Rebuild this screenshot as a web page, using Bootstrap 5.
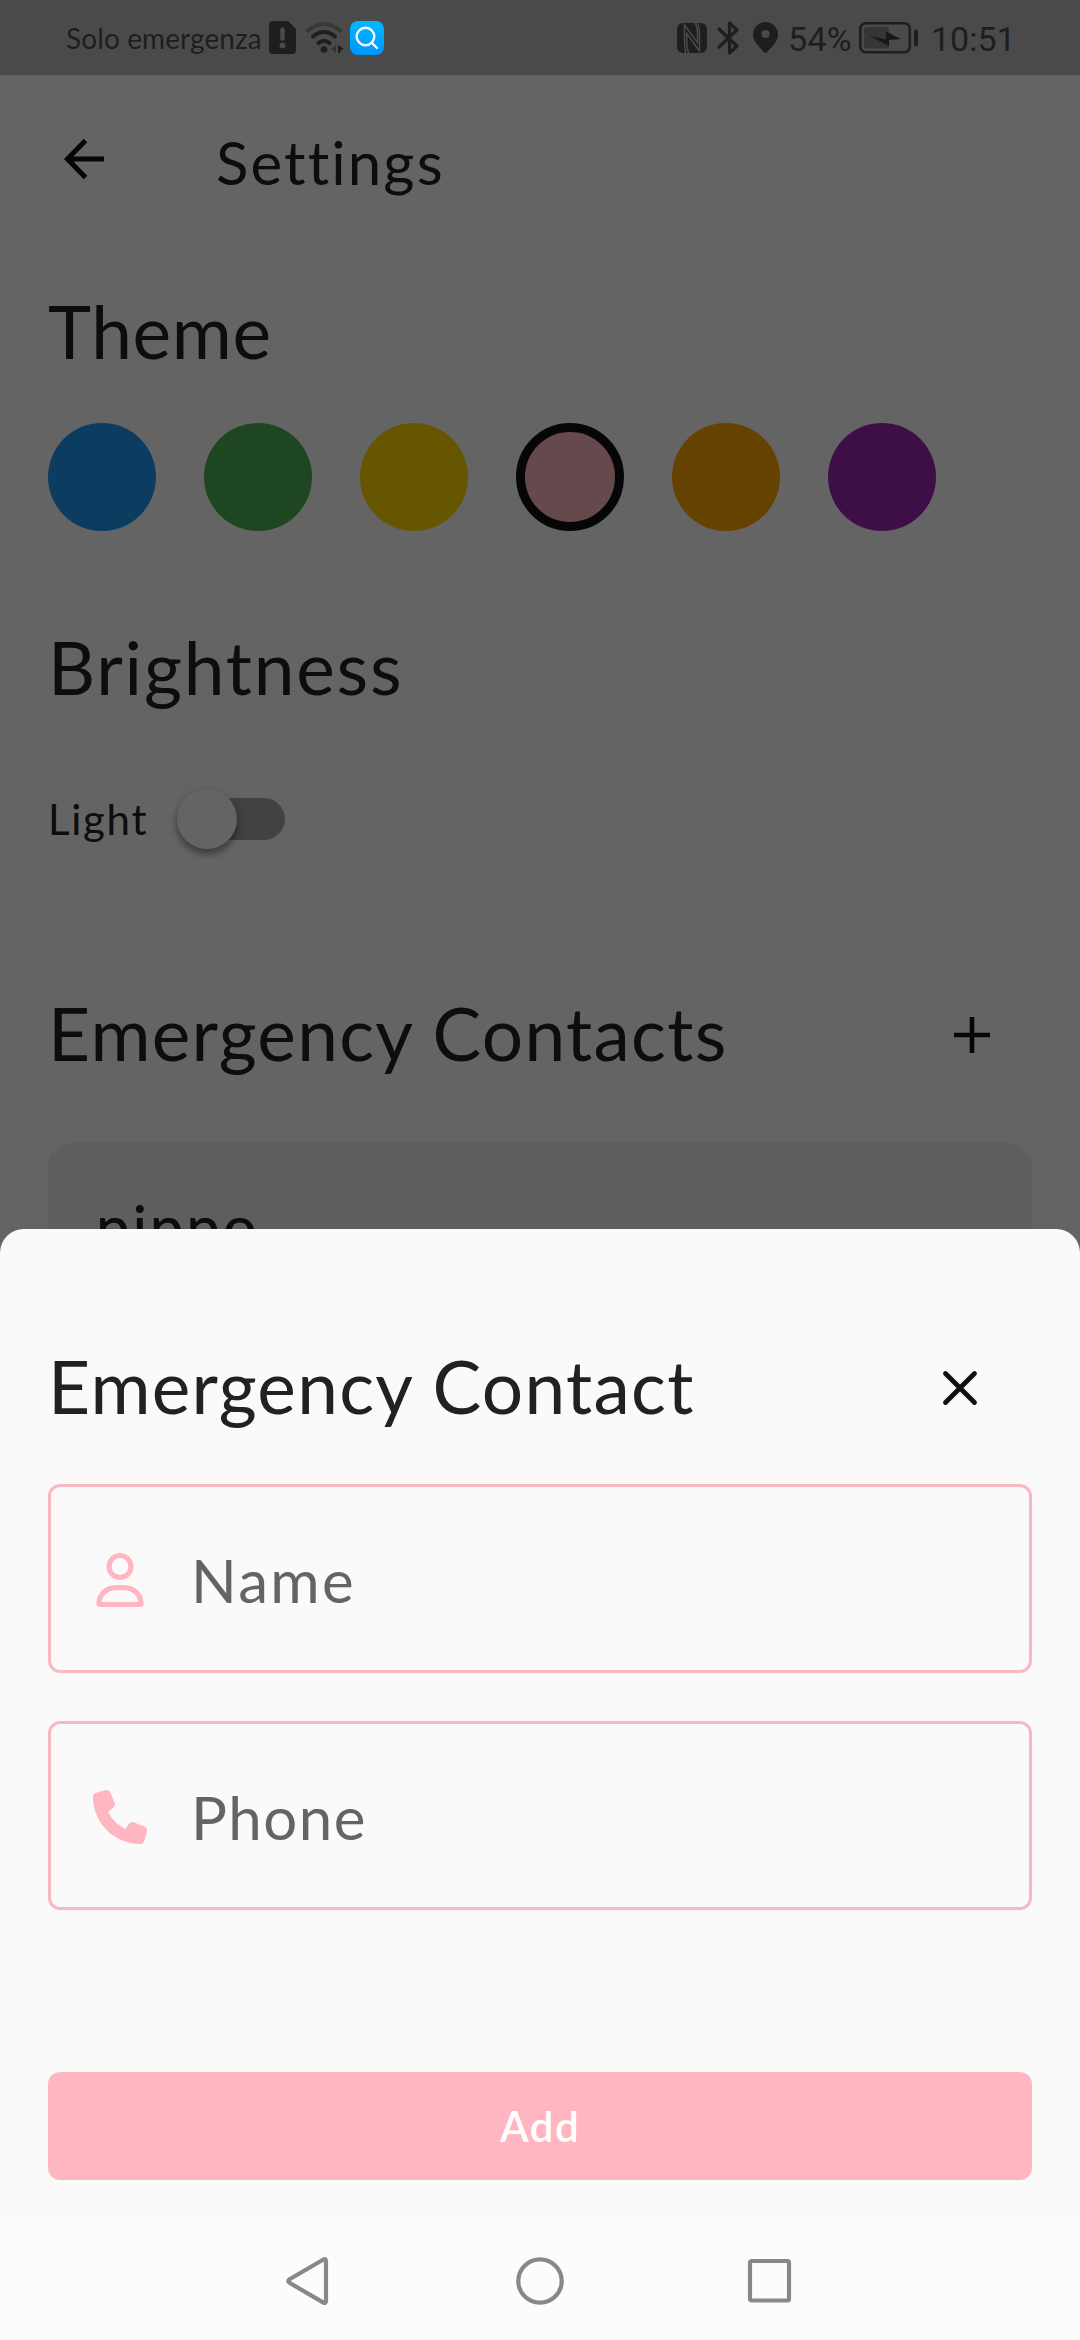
<!DOCTYPE html>
<html lang="en">
<head>
<meta charset="utf-8">
<meta name="viewport" content="width=device-width, initial-scale=1">
<title>Settings</title>
<link href="https://cdn.jsdelivr.net/npm/bootstrap@5.3.0/dist/css/bootstrap.min.css" rel="stylesheet">
<style>
body{font-family:Lato,"Open Sans",sans-serif;color:#212121;background:#fafafa}
.screen{width:1080px;height:2340px}
svg{display:block;flex:none}
.status{height:75px;background:#4a4a4a;color:#1e1e1e;padding:0 69px 0 66px;z-index:3}
.carrier{width:203px;font-size:28px;line-height:34px;letter-spacing:.1px}
.digits{font-family:Roboto,sans-serif;font-size:34px;line-height:40px;padding-top:3px}
.battery-level{width:71px;letter-spacing:.3px}
.clock{width:80px;margin-left:12px}
.ic-wifi{margin:0 6px 0 9px}
.ic-bt{margin:0 13px 0 10px}
.ic-pin{margin-right:10px}
.appbar{height:168px;padding:0 60px}
.app-title{font-size:60px;line-height:72px;margin:5px 0 0 108px;letter-spacing:2.1px;font-weight:400}
.settings{padding:44px 48px 0}
.section-title{font-size:73px;line-height:88px;font-weight:400;letter-spacing:1.3px;margin:0}
.title-theme{letter-spacing:.7px}
.title-brightness{letter-spacing:1.8px;margin-top:92px}
.swatches{gap:48px;margin-top:48px}
.swatch{width:108px;height:108px}
.swatch.selected{border:9px solid #101010}
.c-blue{background:#2196f3}.c-green{background:#4caf50}.c-yellow{background:#ffd700}
.c-pink{background:#ffb6c1}.c-orange{background:#ffa500}.c-purple{background:#9c27b0}
.light-row{height:60px;margin-top:78px;gap:32px}
.light-label{width:100px;font-size:42px;line-height:50px;letter-spacing:1.7px}
.toggle-track{width:105px;height:42px;background:#a5a5a5}
.toggle-knob{width:60px;height:60px;background:#fafafa;margin:-9px 0 0 -3px;box-shadow:0 5px 7px rgba(0,0,0,.35),0 2px 12px rgba(0,0,0,.12)}
.contacts-head{margin-top:140px;padding-right:42px}
.contact-card{background:#ebebeb;border-radius:24px;height:300px;padding:47px 48px;margin-top:66px}
.contact-name{font-size:60px;line-height:72px;font-weight:500;letter-spacing:2.7px}
.scrim{background:rgba(0,0,0,.6);z-index:2}
.sheet{height:1111px;background:#fafafa;border-radius:24px 24px 0 0;z-index:4}
.sheet-body{padding:113px 48px 42px}
.sheet-head{padding-right:54px;margin-bottom:54px}
.field{height:189px;border:3px solid #fab8c3;border-radius:12px;padding:3px 42px 0;gap:44px;color:#646464;font-size:60px;line-height:72px;margin-bottom:48px}
.field svg{fill:#ffb6c1}
.hint-name{letter-spacing:2.3px}
.hint-phone{letter-spacing:1.5px}
.btn-add,.btn-add:hover{height:108px;border:0;border-radius:12px;background:#ffb6c1;color:#fff;font-size:42px;font-weight:600;line-height:50px;letter-spacing:1.5px;margin-top:114px}
.sysnav{height:118px;background:#fcfcfc;gap:180px}
.sysnav svg{fill:none;stroke:#888;stroke-width:4.2;stroke-linejoin:round}
</style>
</head>
<body>
<div class="screen position-relative overflow-hidden">
  <header class="status position-relative d-flex align-items-center">
    <span class="carrier text-nowrap">Solo emergenza</span>
    <svg width="27" height="33" viewBox="0 0 27 33"><path fill="#1e1e1e" d="M4 0h15l8 8v21a4 4 0 0 1-4 4H4a4 4 0 0 1-4-4V4a4 4 0 0 1 4-4z"/><path stroke="#4a4a4a" stroke-width="4.6" stroke-linecap="round" d="M13.5 8.500v9"/><circle cx="13.500" cy="24.500" r="3" fill="#4a4a4a"/></svg>
    <svg class="ic-wifi" width="39" height="34" viewBox="0 0 39 34"><g fill="none" stroke-width="4" stroke-linecap="round"><path stroke="#383838" d="M3 9.500Q19 -3.500 35 9.500"/><path stroke="#1e1e1e" d="M8 15.500Q19 6.500 30 15.500M13.500 22Q19 17.500 24.500 22"/></g><circle cx="19" cy="28.500" r="3.300" fill="#1e1e1e"/><path fill="#333" d="M31 24v8l-5-4z"/><path fill="#1e1e1e" d="M33 24l6 4-3 1-1 3h-2z"/></svg>
    <svg width="34" height="34" viewBox="0 0 34 34"><defs><linearGradient id="sg" x2="0" y2="1"><stop stop-color="#00baff"/><stop offset="1" stop-color="#0094ff"/></linearGradient></defs><rect width="34" height="34" rx="8" fill="url(#sg)"/><g fill="none" stroke="#f4fbff" stroke-width="2.400" stroke-linecap="round"><circle cx="15.500" cy="15.500" r="8.800"/><path d="M22 22l5 5"/></g></svg>
    <svg class="ms-auto" width="30" height="30" viewBox="0 0 30 30"><rect width="30" height="30" rx="6" fill="#1e1e1e"/><g fill="none" stroke="#4a4a4a" stroke-width="1.500"><path d="M9 30Q7.500 26 7.500 16V2L20.500 19.500V11Q20.500 4 18 0"/><path d="M20.500 0Q22.500 4 22.500 14V28L9.800 10.500V19Q9.800 26 12 30"/></g></svg>
    <svg class="ic-bt" width="23" height="34" viewBox="0 0 23 34"><path fill="none" stroke="#1e1e1e" stroke-width="3.200" stroke-linecap="round" stroke-linejoin="round" d="M2 8L20 25 12.500 32V2L20 9 2 26"/></svg>
    <svg class="ic-pin" width="25" height="31" viewBox="0 0 25 31"><path fill="#1e1e1e" fill-rule="evenodd" d="M12.500 0A12.500 12.500 0 0 1 25 12.500C25 20 17.500 26 14 30.300Q12.500 31.700 11 30.300C7.500 26 0 20 0 12.500A12.500 12.500 0 0 1 12.500 0zM12.500 8a4 4 0 1 0 0 8 4 4 0 0 0 0-8z"/></svg>
    <span class="digits battery-level">54%</span>
    <svg width="60" height="32" viewBox="0 0 60 32"><rect x="1.300" y="1.300" width="49.500" height="29" rx="5.500" fill="none" stroke="#1e1e1e" stroke-width="2.600"/><rect x="5" y="5" width="25" height="21.500" rx="2.500" fill="#363636"/><path fill="#181818" d="M10 13.500L27 17.500V9.500L42 17 30 18V24z"/><rect x="55" y="7.500" width="4" height="17" rx="2" fill="#1e1e1e"/></svg>
    <span class="digits clock">10:51</span>
  </header>

  <nav class="appbar d-flex align-items-center">
    <svg width="48" height="48" viewBox="0 0 48 48"><path fill="none" stroke="#0f0f0f" stroke-width="5" d="M25.500 5.500L7.500 24 25.500 42.500M8 24H44"/></svg>
    <h1 class="app-title">Settings</h1>
  </nav>

  <main class="settings">
    <h2 class="section-title title-theme">Theme</h2>
    <div class="swatches d-flex">
      <span class="swatch rounded-circle c-blue"></span>
      <span class="swatch rounded-circle c-green"></span>
      <span class="swatch rounded-circle c-yellow"></span>
      <span class="swatch rounded-circle c-pink selected"></span>
      <span class="swatch rounded-circle c-orange"></span>
      <span class="swatch rounded-circle c-purple"></span>
    </div>
    <h2 class="section-title title-brightness">Brightness</h2>
    <div class="light-row d-flex align-items-center">
      <span class="light-label">Light</span>
      <div class="toggle-track rounded-pill d-flex"><span class="toggle-knob rounded-circle"></span></div>
    </div>
    <div class="contacts-head d-flex align-items-center justify-content-between">
      <h2 class="section-title">Emergency Contacts</h2>
      <svg class="mt-1" width="36" height="36" viewBox="0 0 36 36"><path stroke="#0f0f0f" stroke-width="4.600" d="M18 0V36M0 18H36"/></svg>
    </div>
    <div class="contact-card"><div class="contact-name">pippo</div></div>
  </main>

  <div class="scrim position-absolute top-0 start-0 w-100 h-100"></div>

  <section class="sheet position-absolute bottom-0 start-0 w-100 overflow-hidden">
    <div class="sheet-body">
      <div class="sheet-head d-flex align-items-center justify-content-between">
        <h2 class="section-title">Emergency Contact</h2>
        <svg class="mt-1" width="36" height="36" viewBox="0 0 36 36"><path stroke="#111" stroke-width="4.800" stroke-linecap="round" d="M3.500 3.500L32.500 32.500M32.500 3.500L3.500 32.500"/></svg>
      </div>
      <div class="field d-flex align-items-center">
        <svg width="54" height="54" viewBox="0 0 448 512"><path d="M304 128a80 80 0 1 0-160 0 80 80 0 1 0 160 0zM96 128a128 128 0 1 1 256 0A128 128 0 1 1 96 128zM49.300 464H398.700c-8.900-63.300-63.300-112-129-112H178.300c-65.700 0-120.100 48.700-129 112zM0 482.300C0 383.800 79.800 304 178.300 304h91.400C368.200 304 448 383.800 448 482.300c0 16.400-13.300 29.700-29.700 29.700H29.700C13.300 512 0 498.700 0 482.300z"/></svg>
        <span class="hint-name">Name</span>
      </div>
      <div class="field d-flex align-items-center">
        <svg width="54" height="54" viewBox="0 0 512 512"><path d="M164.900 24.600c-7.700-18.600-28-28.500-47.400-23.200l-88 24C12.100 30.200 0 46 0 64c0 247.400 200.600 448 448 448 18 0 33.800-12.100 38.600-29.500l24-88c5.300-19.400-4.600-39.700-23.200-47.400l-96-40c-16.300-6.800-35.200-2.100-46.300 11.600L304.700 368C234.300 334.700 177.300 277.700 144 207.300L193.300 167c13.700-11.200 18.400-30 11.600-46.300l-40-96z"/></svg>
        <span class="hint-phone">Phone</span>
      </div>
      <button type="button" class="btn btn-add w-100">Add</button>
    </div>
    <div class="sysnav d-flex justify-content-center align-items-center">
      <svg width="50" height="50" viewBox="0 0 50 50"><path d="M38 3.700Q41 2 41 5V45Q41 48 38 46.300L4.500 26.800Q2 25 4.500 23.200z"/></svg>
      <svg width="50" height="50" viewBox="0 0 50 50"><circle cx="25" cy="25" r="21.700"/></svg>
      <svg width="50" height="50" viewBox="0 0 50 50"><rect x="5" y="5" width="39" height="39.500" rx="1.500"/></svg>
    </div>
  </section>
</div>
<script src="https://cdn.jsdelivr.net/npm/bootstrap@5.3.0/dist/js/bootstrap.bundle.min.js"></script>
</body>
</html>
